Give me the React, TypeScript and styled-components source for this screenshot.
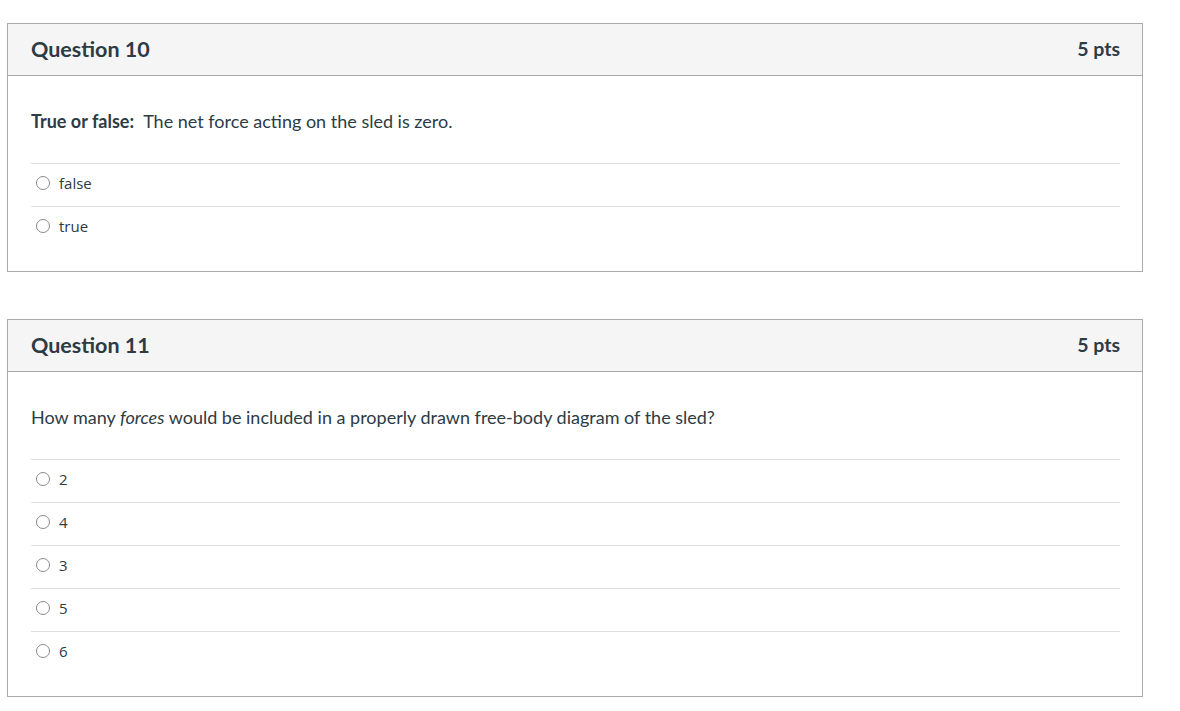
import styled, { createGlobalStyle } from "styled-components";

const GlobalStyle = createGlobalStyle`
  body {
    margin: 0;
    background: #ffffff;
    font-family: "Lato", "Noto Sans", sans-serif;
    color: #2d3b45;
  }
`;

const Page = styled.div`
  width: 1136px;
  padding: 23px 0 0 7px;
  display: flex;
  flex-direction: column;
  gap: 47px;
`;

const Card = styled.div`
  border: 1px solid #aaaaaa;
  background: #ffffff;
`;

const Header = styled.div`
  height: 52px;
  padding: 0 22px 2px 23px;
  box-sizing: border-box;
  background: #f5f5f5;
  border-bottom: 1px solid #aaaaaa;
  display: flex;
  align-items: center;
  justify-content: space-between;
`;

const Title = styled.h2`
  margin: 0;
  font-size: 21.5px;
  font-weight: 700;
  color: #2d3b45;
`;

const Points = styled.span`
  font-size: 19.5px;
  font-weight: 700;
  color: #2d3b45;
`;

const Body = styled.div`
  padding: 32px 22px 22px 23px;
`;

const Prompt = styled.div`
  font-size: 18px;
  line-height: 26px;
  margin-bottom: 29px;

  b {
    font-weight: 700;
    margin-right: 5px;
  }
`;

const AnswerList = styled.div`
  display: flex;
  flex-direction: column;
`;

const Answer = styled.label`
  border-top: 1px solid #dddddd;
  display: flex;
  align-items: center;
  gap: 9px;
  padding: 0 0 4px 5px;
  height: 38px;
  font-family: "Open Sans", "Noto Sans", sans-serif;
  font-size: 15px;
  color: #2d3b45;
`;

const Radio = styled.span`
  width: 12px;
  height: 12px;
  border: 1px solid #8a8a8a;
  border-radius: 50%;
  background: #ffffff;
  flex-shrink: 0;
`;

type Question = {
  title: string;
  points: string;
  prompt: React.ReactNode;
  answers: string[];
};

const questions: Question[] = [
  {
    title: "Question 10",
    points: "5 pts",
    prompt: (
      <>
        <b>True or false:</b> The net force acting on the sled is zero.
      </>
    ),
    answers: ["false", "true"],
  },
  {
    title: "Question 11",
    points: "5 pts",
    prompt: (
      <>
        How many <i>forces</i> would be included in a properly drawn free-body
        diagram of the sled?
      </>
    ),
    answers: ["2", "4", "3", "5", "6"],
  },
];

const App = () => {
  return (
    <>
      <GlobalStyle />
      <Page>
        {questions.map((q) => (
          <Card key={q.title}>
            <Header>
              <Title>{q.title}</Title>
              <Points>{q.points}</Points>
            </Header>
            <Body>
              <Prompt>{q.prompt}</Prompt>
              <AnswerList>
                {q.answers.map((a) => (
                  <Answer key={a}>
                    <Radio />
                    {a}
                  </Answer>
                ))}
              </AnswerList>
            </Body>
          </Card>
        ))}
      </Page>
    </>
  );
};

export default App;
